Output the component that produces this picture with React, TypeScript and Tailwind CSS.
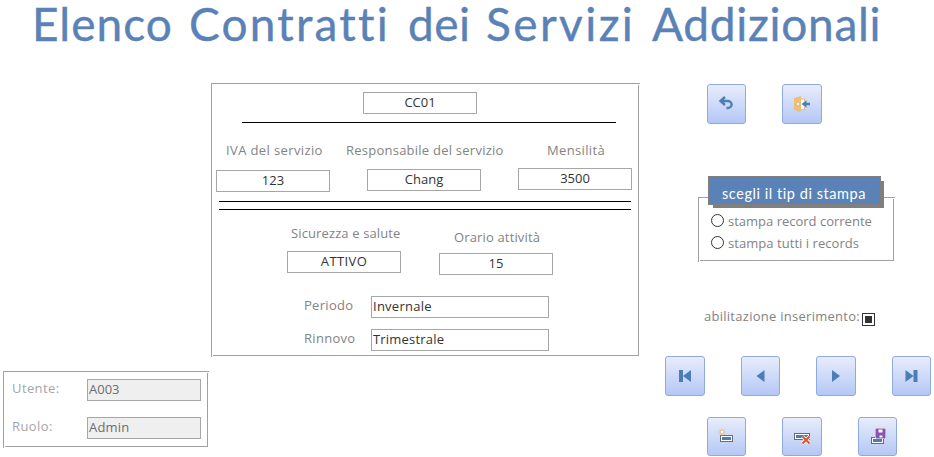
import type { ReactNode } from 'react';

const SANS = "font-['Open_Sans','Liberation_Sans',sans-serif]";

// Etched frame: the lower-right strokes sit one pixel inside the upper-left ones.
function Frame({ className, children }: { className: string; children: ReactNode }) {
  return (
    <section className={`flex border-l border-t border-[#a0a0a0] pb-px pr-px pl-px pt-px ${className}`}>
      <div className="min-w-0 flex-1 border-b border-r border-[#a0a0a0]">{children}</div>
    </section>
  );
}

function Field({ value, className = '' }: { value: string; className?: string }) {
  return (
    <div className={`h-[22px] shrink-0 whitespace-nowrap border border-[#a6a6a6] text-[13px] leading-[19px] ${className}`}>
      {value}
    </div>
  );
}

function Label({ text, className = '' }: { text: string; className?: string }) {
  return <span className={`block shrink-0 whitespace-nowrap text-[13px] leading-[18px] ${className}`}>{text}</span>;
}

function ToolButton({ label, className, children }: { label: string; className: string; children: ReactNode }) {
  return (
    <button
      aria-label={label}
      className={`flex shrink-0 items-center justify-center rounded-[3px] border border-[#8faadc] bg-linear-to-b from-[#e8edfb] to-[#b4c7f5] ${className}`}
    >
      <svg width="20" height="20" viewBox="0 0 20 20" className="shrink-0">
        {children}
      </svg>
    </button>
  );
}

function RecordShape({ x, y }: { x: number; y: number }) {
  return (
    <g shapeRendering="crispEdges">
      <rect x={x} y={y} width="13" height="7" fill="#6b6b6b" />
      <rect x={x + 1} y={y + 1} width="11" height="5" fill="#fff" />
      <rect x={x + 2} y={y + 2} width="9" height="3" fill="#4a7eb5" />
    </g>
  );
}

export default function App() {
  return (
    <main className={`flex h-[457px] w-[934px] flex-col bg-white ${SANS}`}>
      <h1 className="flex h-[83px] shrink-0 whitespace-nowrap pl-8 font-['Lato','Liberation_Sans',sans-serif] text-[46px] leading-[48px] text-[#5b82b6] [-webkit-text-stroke:0.4px_#5b82b6]">
        <span className="w-[157px] tracking-[1px]">Elenco</span>
        <span className="w-[219px] tracking-[2.2px]">Contratti</span>
        <span className="w-[78px] tracking-[0.5px]">dei</span>
        <span className="w-[166px] tracking-[2.4px]">Servizi</span>
        <span className="tracking-[0.7px]">Addizionali</span>
      </h1>

      <div className="flex h-[374px] shrink-0">
        <aside className="w-[211px] shrink-0 pl-[3px] pt-[288px]">
          <Frame className="h-[77px] w-[206px]">
            <div className="flex pl-[7px] pt-[6px]">
              <Label text="Utente:" className="w-[75px] tracking-[0.4px] text-[#a6a6a6]" />
              <Field value="A003" className="w-[114px] bg-[#efefef] pl-px text-[#6d6d6d]" />
            </div>
            <div className="flex pl-[7px] pt-4">
              <Label text="Ruolo:" className="w-[75px] tracking-[0.4px] text-[#a6a6a6]" />
              <Field value="Admin" className="w-[114px] bg-[#efefef] pl-px tracking-[0.2px] text-[#6d6d6d]" />
            </div>
          </Frame>
        </aside>

        <Frame className="h-[274px] w-[429px] shrink-0">
          <div className="pt-[7px] text-[#333]">
            <Field value="CC01" className="ml-[150px] w-[114px] text-center" />
            <div className="ml-[29px] mt-2 h-px w-[374px] bg-black" />
            <div className="mt-[18px] flex h-[27px] pl-[13px] text-[#838383]">
              <Label text="IVA del servizio" className="w-[120px] tracking-[0.38px]" />
              <Label text="Responsabile del servizio" className="w-[201px] tracking-[0.24px]" />
              <Label text="Mensilità" className="tracking-[0.35px]" />
            </div>
            <div className="flex h-[33px] pl-[3px]">
              <Field value="123" className="mt-[2px] w-[114px] text-center" />
              <Field value="Chang" className="ml-[37px] mt-px w-[114px] text-center" />
              <Field value="3500" className="ml-[37px] w-[114px] text-center" />
            </div>
            <div className="ml-[6px] h-[9px] w-[412px] border-y border-black" />
            <div className="mt-[14px] flex h-[27px] pl-[78px] text-[#838383]">
              <Label text="Sicurezza e salute" className="w-[163px] tracking-[0.12px]" />
              <Label text="Orario attività" className="mt-1 tracking-[0.15px]" />
            </div>
            <div className="flex h-[45px] pl-[74px]">
              <Field value="ATTIVO" className="w-[114px] text-center tracking-[0.4px]" />
              <Field value="15" className="ml-[38px] mt-[2px] w-[114px] text-center" />
            </div>
            <div className="flex h-[33px] pl-[91px]">
              <Label text="Periodo" className="w-[67px] tracking-[0.3px] text-[#838383]" />
              <Field value="Invernale" className="w-[178px] pl-px tracking-[0.25px]" />
            </div>
            <div className="flex pl-[91px]">
              <Label text="Rinnovo" className="w-[67px] tracking-[0.3px] text-[#838383]" />
              <Field value="Trimestrale" className="w-[178px] pl-px tracking-[0.2px]" />
            </div>
          </div>
        </Frame>

        <div className="w-[294px] shrink-0 pt-px">
          <div className="flex pl-[67px]">
            <ToolButton label="Annulla" className="h-10 w-[39px]">
              <path d="M8.5 2.5 4 6.5 8.5 10.5M5 6.5h6.2a3.8 3.4 0 1 1 0 7H10" transform="translate(-.5 .5)" fill="none" stroke="#4a7eb5" strokeWidth="2.4" />
            </ToolButton>
            <ToolButton label="Esci" className="ml-9 h-10 w-10">
              <path d="M9 5h3.5v10.500H9" fill="#fff" stroke="#ebc07d" strokeWidth="1.2" />
              <path d="M2 4 9 2v16l-7-2z" fill="#ebc07d" />
              <circle cx="6" cy="10" r="1" fill="#fff" />
              <path d="M10.5 7.5h4v5h-4z" fill="#fff" />
              <path d="M9.5 10 14.5 6.3v2.400H18v2.600h-3.500v2.400z" fill="#4a7eb5" />
            </ToolButton>
          </div>

          <div className="pl-[58px] pt-[73px]">
            <Frame className="h-[65px] w-[197px]">
              <div className="-mt-[23px] ml-2 h-[29px] w-[173px] border border-[#7f7f7f] bg-[#5b82b6] pl-[13px] font-['Lato','Liberation_Sans',sans-serif] text-[14.5px] leading-[33px] tracking-[0.55px] whitespace-nowrap text-white shadow-[4px_4px_0_-1px_#7f7f7f]">
                scegli il tip di stampa
              </div>
              <div className="mt-1 flex h-[22px] items-center pl-[11px] pt-[2px] text-[#838383]">
                <span className="-mt-px size-[13px] shrink-0 rounded-full border border-[#333]" />
                <Label text="stampa record corrente" className="ml-1" />
              </div>
              <div className="flex h-[22px] items-center pl-[11px] pt-[2px] text-[#838383]">
                <span className="-mt-px size-[13px] shrink-0 rounded-full border border-[#333]" />
                <Label text="stampa tutti i records" className="ml-1 tracking-[0.05px]" />
              </div>
            </Frame>
          </div>

          <div className="mt-[45px] flex h-[49px] pl-16">
            <Label text="abilitazione inserimento:" className="w-[158px] tracking-[0.27px] text-[#838383]" />
            <span className="mt-[6px] flex size-[13px] items-center justify-center border border-[#333]">
              <span className="size-[7px] bg-[#333]" />
            </span>
          </div>

          <div className="flex pl-[25px]">
            <ToolButton label="Primo record" className="h-10 w-10">
              <path d="M4 4h4v12H4zM16 4v12l-8-6z" fill="#4a7eb5" />
            </ToolButton>
            <ToolButton label="Record precedente" className="ml-9 h-10 w-[39px]">
              <path d="M13.5 4v12l-8-6z" fill="#4a7eb5" />
            </ToolButton>
            <ToolButton label="Record successivo" className="ml-9 h-10 w-10">
              <path d="M6 4v12l8-6z" fill="#4a7eb5" />
            </ToolButton>
            <ToolButton label="Ultimo record" className="ml-9 h-10 w-[39px]">
              <path d="M3.5 4v12l8-6zM11.5 4h4v12h-4z" fill="#4a7eb5" />
            </ToolButton>
          </div>

          <div className="flex pl-[67px] pt-[21px]">
            <ToolButton label="Nuovo record" className="h-[39px] w-[39px]">
              <RecordShape x={2.5} y={7.5} />
              <path d="M5 1.5v7M1.5 5h7M2.5 2.5l5 5M7.5 2.5l-5 5" stroke="#ebb96e" strokeWidth="1" />
              <circle cx="5" cy="5" r="1.2" fill="#fff" />
            </ToolButton>
            <ToolButton label="Elimina record" className="ml-9 h-[39px] w-10">
              <g shapeRendering="crispEdges">
                <path d="M2 5.5h16v7H2z" fill="#6b6b6b" />
                <path d="M3 6.5h14v5H3z" fill="#fff" />
                <path d="M4 7.5h12v3H4z" fill="#4a7eb5" />
              </g>
              <path d="m10.5 9.5 7 7M17.5 9.5l-7 7" stroke="#fff" strokeWidth="3.5" />
              <path d="m10.5 9.5 7 7M17.5 9.5l-7 7" stroke="#d9532f" strokeWidth="2" />
            </ToolButton>
            <ToolButton label="Salva record" className="ml-9 h-[39px] w-[39px]">
              <RecordShape x={2.5} y={9.5} />
              <path d="M7 1h11v11H7z" fill="#fff" />
              <path d="M7.5 1.5h10v10h-9l-1-1z" fill="#8755ad" />
              <path d="M10.5 2.5h4v3h-4zM11.5 8.5h3v2h-3z" fill="#fff" />
            </ToolButton>
          </div>
        </div>
      </div>
    </main>
  );
}
